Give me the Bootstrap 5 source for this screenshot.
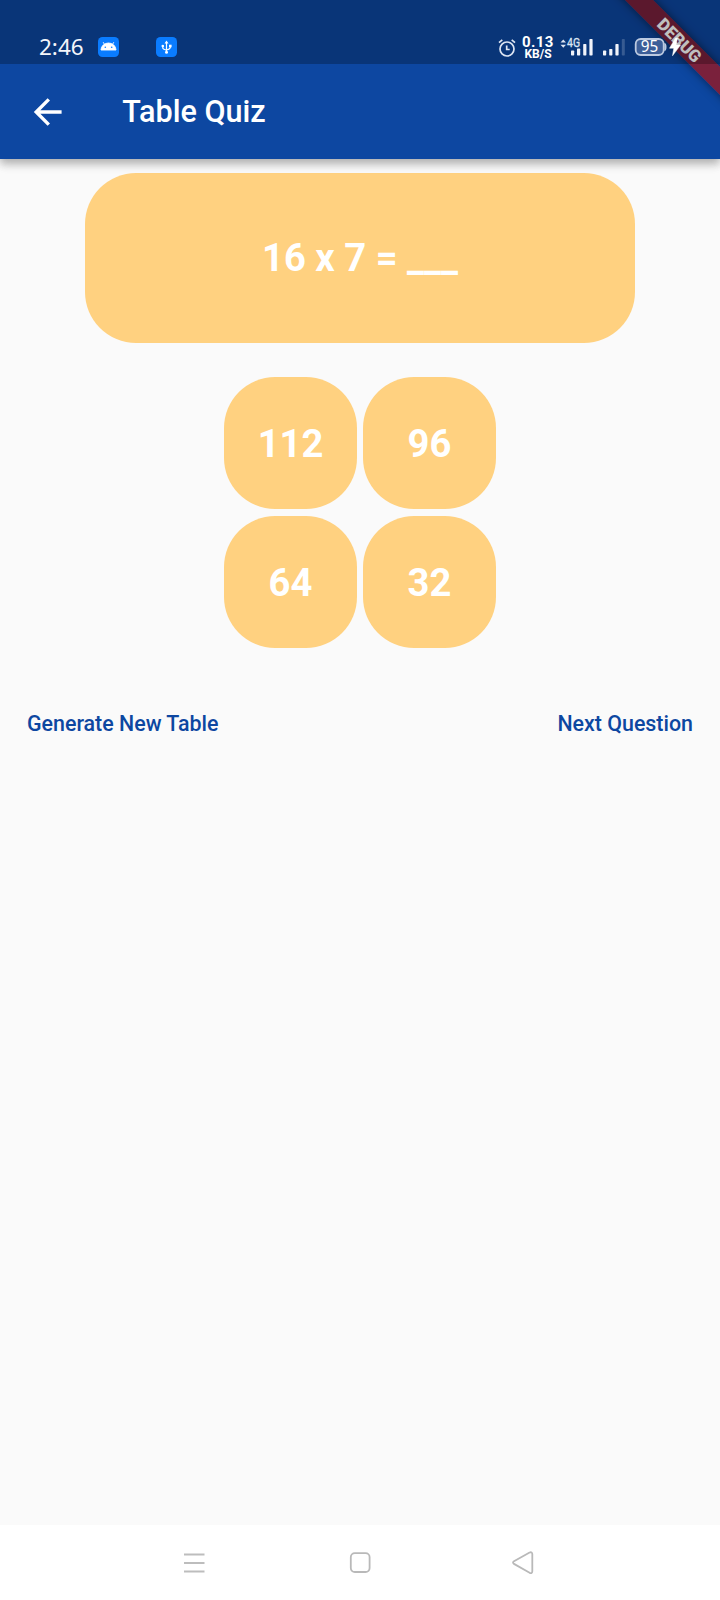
<!DOCTYPE html>
<html lang="en">
<head>
<meta charset="utf-8">
<meta name="viewport" content="width=device-width, initial-scale=1">
<title>Table Quiz</title>
<link href="https://cdn.jsdelivr.net/npm/bootstrap@5.3.0/dist/css/bootstrap.min.css" rel="stylesheet">
<style>
  body { font-family: Roboto, sans-serif; background: #fafafa; }
  svg { display: block; flex: none; }
  .screen { height: 1600px; }
  .top-area { background: #0d47a1; height: 159px; box-shadow: 0 4px 8px rgba(0,0,0,.2), 0 7px 9px rgba(0,0,0,.08), 0 2px 14px rgba(0,0,0,.08); }
  .status-bar { height: 64px; background: rgba(0,0,0,.25); padding: 30px 0 0 39px; z-index: 2; }
  .clock { font: 400 22.5px/34px "Noto Sans", sans-serif; width: 59px; letter-spacing: 0; color: #f4f6fb; margin-top: -1px; }
  .speed { width: 32px; margin-left: 6px; font-weight: 700; }
  .speed-num { font-size: 15px; line-height: 13px; letter-spacing: .4px; }
  .speed-unit { font-size: 12px; line-height: 10px; }
  .toolbar { height: 95px; padding-left: 33px; }
  .title { font-size: 30.6px; font-weight: 500; line-height: 36px; margin-left: 59.3px; padding-top: 1.5px; }
  .debug-clip { width: 130px; height: 130px; z-index: 1; }
  .debug-ribbon { width: 260px; height: 20.4px; left: -40.5px; top: 30.5px; transform: rotate(45deg); background: rgba(160,20,24,.74); box-shadow: 0 0 10px rgba(0,0,0,.5); color: #fff; font-size: 17px; font-weight: 900; line-height: 20.4px; padding-right: 2px; }
  .tile { background: #ffd180; border-radius: 51px; color: #fff; font-weight: 700; font-size: 38.2px; line-height: 44px; }
  .question { width: 550px; height: 170px; margin-top: 13.5px; }
  .answers { display: grid; grid-template-columns: 132.6px 132.6px; gap: 6.4px; margin-top: 34.4px; }
  .answer { height: 132.6px; border: 0; padding: 2px 0 0; }
  .actions { padding: 0 27px; margin-top: 63px; }
  .action { font-size: 21.4px; font-weight: 500; line-height: 26px; color: #0d47a1; text-decoration: none; }
  .nav-keys { height: 75px; background: #fff; padding-left: 183px; padding-top: 1px; }
</style>
</head>
<body>
<div class="screen d-flex flex-column overflow-hidden position-relative">
  <header class="top-area position-relative flex-shrink-0">
    <div class="debug-clip position-absolute top-0 end-0 overflow-hidden">
      <div class="debug-ribbon position-absolute text-center">DEBUG</div>
    </div>
    <div class="status-bar d-flex align-items-center position-relative">
      <div class="clock">2:46</div>
      <svg width="21" height="20" viewBox="0 0 21 20"><rect width="21" height="20" rx="4.5" fill="#0a7cff"/><path d="M3 13a7.5 7 0 0 1 15 0zM6.8 8 5.2 5.2M14.2 8l1.6-2.800" fill="#fff" stroke="#fff" stroke-width=".9"/><circle cx="7.300" cy="10.200" r=".8" fill="#0a7cff"/><circle cx="13.700" cy="10.200" r=".8" fill="#0a7cff"/></svg>
      <svg width="21" height="20" viewBox="0 0 21 20" style="margin-left:37px"><rect width="21" height="20" rx="4.500" fill="#0a7cff"/><path d="M10.500 5v10M6.800 8.500v2.500q0 1 3.700 2.200M14.300 8v2.500q0 1.300-3.800 2.500" fill="none" stroke="#fff" stroke-width="1.200"/><path d="M10.500 3.600l2 2.900h-4z" fill="#fff"/><circle cx="10.500" cy="15.300" r="1.500" fill="#fff"/><circle cx="6.800" cy="9" r="1.300" fill="#fff"/><path d="M13 7.700h2.600v2.600H13z" fill="#fff"/></svg>
      <svg width="18" height="19" viewBox="0 0 18 19" style="margin-left:321px" fill="none" stroke="#dce4f2" stroke-width="1.700"><circle cx="9" cy="11" r="7"/><path d="M8.700 7.500v4h3M1 4.700l3.300-2.800M17 4.700l-3.300-2.800"/></svg>
      <div class="speed text-white text-center text-nowrap"><div class="speed-num">0.13</div><div class="speed-unit">KB/S</div></div>
      <svg width="34" height="20" viewBox="0 0 34 20" style="margin-left:6px"><path d="M.5 5.500 3.300 2.500 6 5.500zM.5 7.700 3.300 10.700 6 7.700z" fill="#dce4f2"/><text x="7" y="10.300" font-family="Roboto, sans-serif" font-size="12" textLength="13" lengthAdjust="spacingAndGlyphs" fill="#dce4f2" stroke="#dce4f2" stroke-width=".3">4G</text><g fill="#f0f3fa"><rect x="11" y="13.500" width="3.200" height="5" rx=".7"/><rect x="17" y="11.500" width="3.200" height="7" rx=".7"/><rect x="23.200" y="7" width="3.200" height="11.500" rx=".7"/><rect x="29.400" y="2" width="3.200" height="16.500" rx=".7"/></g></svg>
      <svg width="24" height="20" viewBox="0 0 24 20" style="margin-left:8px" fill="#f0f3fa"><rect x="1" y="13.500" width="3.200" height="5" rx=".7"/><rect x="7.200" y="12" width="3.200" height="6.500" rx=".7"/><rect x="13.400" y="7" width="3.200" height="11.500" rx=".7"/><rect x="19.800" y="2" width="3" height="16.500" rx=".7" opacity=".2"/></svg>
      <svg width="48" height="20" viewBox="0 0 48 20" style="margin-left:8px"><rect x="1.700" y="2" width="28" height="16" rx="5" fill="#3c5e98" stroke="#bbc9e0" stroke-width="1.800"/><path d="M30.300 6q2.200 0 2.200 4t-2.200 4z" fill="#bbc9e0"/><text x="15.500" y="15" text-anchor="middle" font-family="Noto Sans, sans-serif" font-size="15.500" textLength="17.500" lengthAdjust="spacingAndGlyphs" fill="#fff">95</text><path d="M41.500 1 35.500 11.200h4.300L38.500 18.800l8-10.800h-4.500L43.500 1z" fill="#fff" stroke="#fff" stroke-width=".5"/></svg>
    </div>
    <nav class="toolbar d-flex align-items-center text-white">
      <svg width="30" height="30" viewBox="0 0 30 30" fill="none" stroke="#fff" stroke-width="3.400"><path d="M28.600 15H4M15.800 2.400 3.200 15l12.600 12.600"/></svg>
      <h1 class="title mb-0">Table Quiz</h1>
    </nav>
  </header>

  <main class="flex-grow-1 d-flex flex-column align-items-center">
    <div class="tile question d-flex align-items-center justify-content-center">16 x 7 = ___</div>
    <div class="answers">
      <button class="tile answer">112</button>
      <button class="tile answer">96</button>
      <button class="tile answer">64</button>
      <button class="tile answer">32</button>
    </div>
    <div class="actions w-100 d-flex justify-content-between">
      <a class="action" href="#">Generate New Table</a>
      <a class="action" href="#">Next Question</a>
    </div>
  </main>

  <footer class="nav-keys d-flex align-items-center flex-shrink-0">
    <svg width="22" height="24" viewBox="0 0 22 24" stroke="#bdbdbd" stroke-width="2"><path d="M1 3.500h20.500M1 12h20.500M1 20.500h20.500"/></svg>
    <svg width="22" height="24" viewBox="0 0 22 24" style="margin-left:144px" fill="none" stroke="#b9b9b9" stroke-width="1.800"><rect x="1.800" y="2.200" width="18.800" height="18.800" rx="4"/></svg>
    <svg width="22" height="24" viewBox="0 0 22 24" style="margin-left:141px" fill="none" stroke="#b9b9b9" stroke-width="1.800"><path d="M17.600 1.500 2 10.200q-2 1.300 0 2.700L17.600 21.800q2.600 1 2.700-1.500V3q-.1-2.400-2.700-1.500z"/></svg>
  </footer>
</div>
<script src="https://cdn.jsdelivr.net/npm/bootstrap@5.3.0/dist/js/bootstrap.bundle.min.js"></script>
</body>
</html>
